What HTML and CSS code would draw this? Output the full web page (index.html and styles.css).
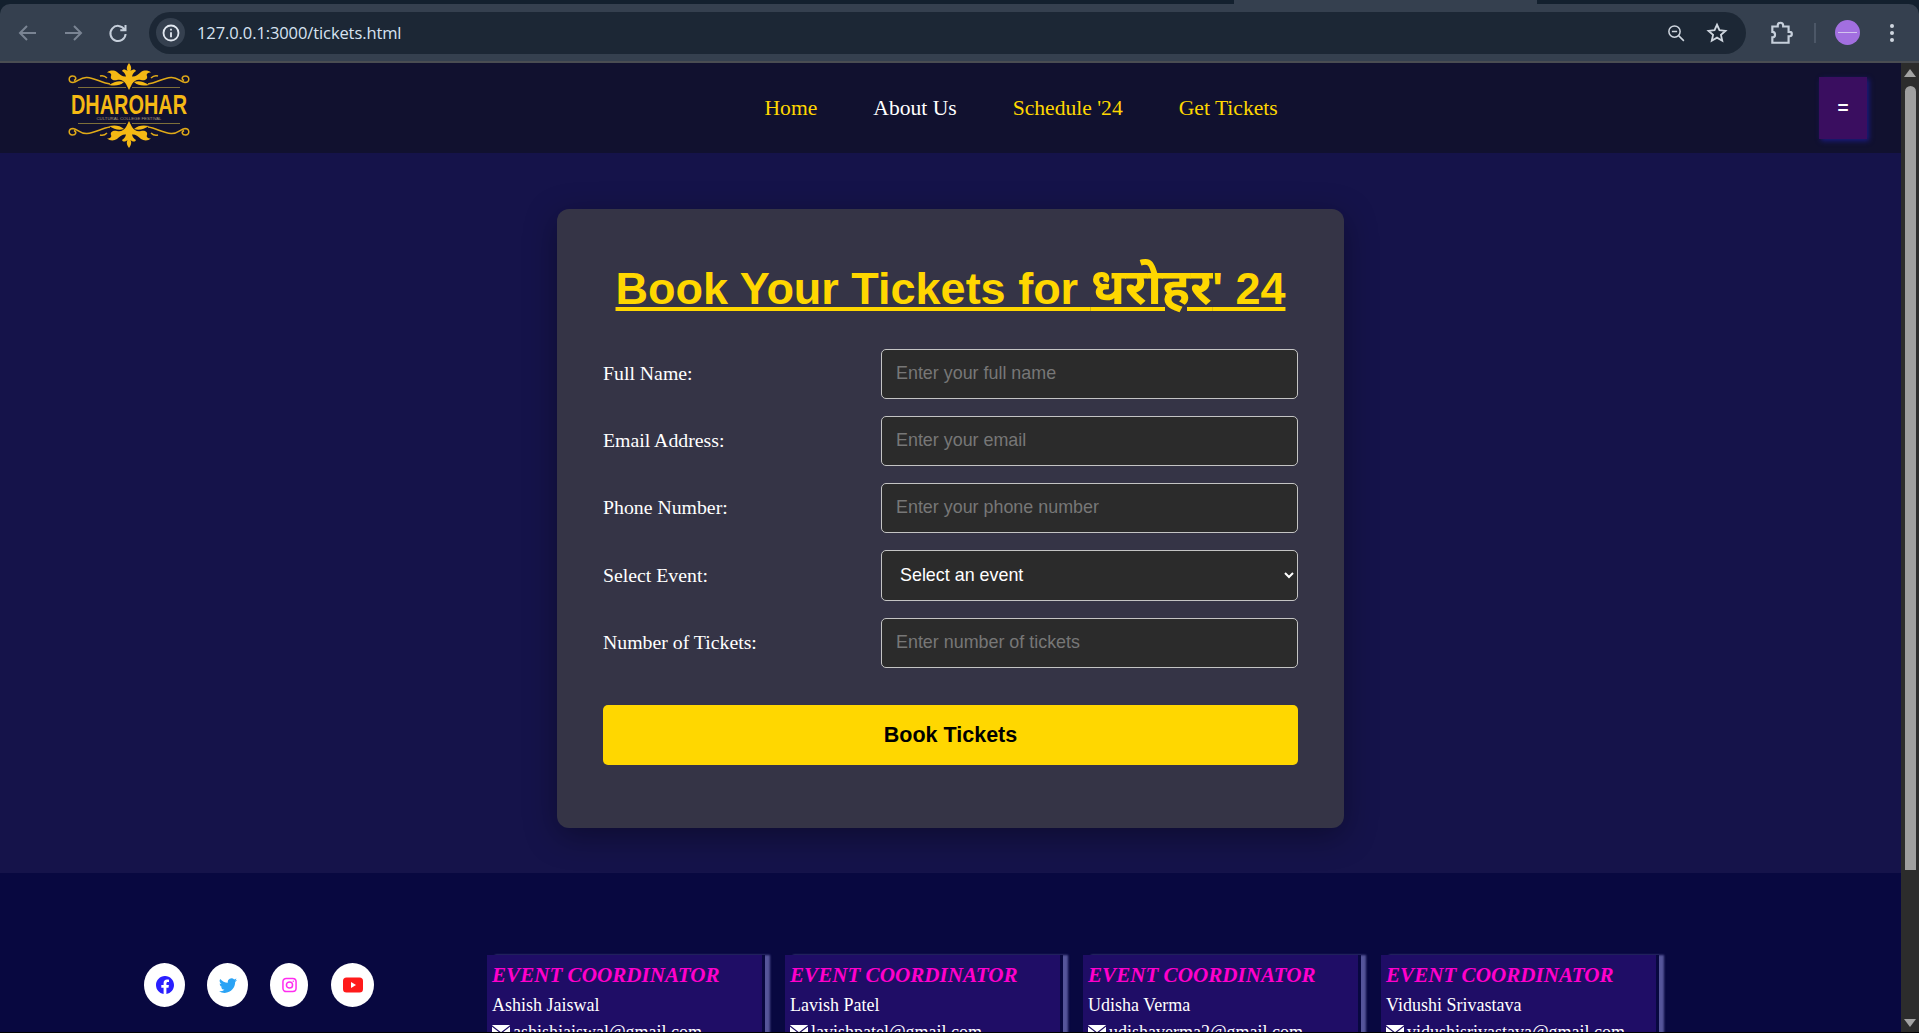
FILE: index.html

```html
<!DOCTYPE html>
<html lang="en">
<head>
  <meta charset="UTF-8" />
  <title>Tickets - Dharohar</title>
  <link rel="stylesheet" href="styles.css">
</head>
<body>
  <div class="browser-top">
    <div class="tab-strip"><div class="tab-gap"></div></div>
    <div class="toolbar">
      <svg class="tb-icon dim" viewBox="0 0 24 24"><path d="M20 12H5M11 5l-7 7 7 7"/></svg>
      <svg class="tb-icon dim" viewBox="0 0 24 24"><path d="M4 12h15M13 5l7 7-7 7"/></svg>
      <svg class="tb-icon" viewBox="0 0 24 24"><path d="M18.500 8.500A7.600 7.600 0 1 0 19.600 13M19.500 4v5.200h-5.200"/></svg>
      <div class="url-pill">
        <span class="info-chip">
          <svg viewBox="0 0 24 24"><circle cx="12" cy="12" r="9"/><path d="M12 11v6M12 7v2"/></svg>
        </span>
        <span class="url-text">127.0.0.1:3000/tickets.html</span>
        <svg class="pill-icon" viewBox="0 0 24 24"><circle cx="10" cy="10" r="7.500"/><path d="M6.500 10h7M15.500 15.500l7 7"/></svg>
        <svg class="pill-icon star" viewBox="0 0 24 24"><path d="M12 3l2.700 6 6.500.7-4.900 4.300 1.400 6.400L12 17.100l-5.700 3.300 1.400-6.400-4.900-4.300 6.500-.7z"/></svg>
      </div>
      <svg class="tb-icon puzzle" viewBox="0 0 24 24"><path d="M4 6h5V5a2.500 2.500 0 0 1 5 0v1h5v5h1a2 2 0 0 1 0 4h-1v6H4v-5a2.500 2.500 0 0 0 0-5z"/></svg>
      <span class="tb-sep"></span>
      <span class="avatar"><span></span></span>
      <span class="tb-dots"><i></i><i></i><i></i></span>
    </div>
  </div>

  <div class="viewport">
    <div class="page">
      <header class="site-nav">
        <a class="logo" href="#">
          <svg viewBox="0 0 122 85" width="122" height="85">
            <defs>
              <g id="orn-half">
                <path class="orn-fill" d="M61 0C63 3 64 5 62.500 8C65 6 67 6 68 8C66 9 64.500 11 64 13.500C67 14 70 12 73 9C76 7 80 7 83 9.500C80 9.500 78 11 79 13C80 16 77 18 73 17C69 16 66 18 64 21L61 27Z"/>
                <path class="orn-fill" d="M66 19C71 17 76 19 81 22C76 23 70 23 66 19Z"/>
                <path class="orn-line" d="M80 21C88 20 95 15 103 14.500C110 14 112 19 117 19.500C122 19.500 122 13 117.500 13C114 13 113 16 116 17.500"/>
                <path class="orn-thin" d="M64 24.500H112"/>
                <path class="orn-line" d="M83 15C85 13 87 12 90 13"/>
              </g>
              <g id="orn-full">
                <use href="#orn-half"/>
                <use href="#orn-half" transform="translate(122 0) scale(-1 1)"/>
              </g>
            </defs>
            <use href="#orn-full"/>
            <use href="#orn-full" transform="translate(0 85) scale(1 -1)"/>
            <text class="logo-word" x="61" y="51" text-anchor="middle" textLength="116" lengthAdjust="spacingAndGlyphs">DHAROHAR</text>
            <text class="logo-sub" x="61" y="57" text-anchor="middle" textLength="65" lengthAdjust="spacingAndGlyphs">CULTURAL COLLEGE FESTIVAL</text>
          </svg>
        </a>
        <nav class="nav-links">
          <a href="#">Home</a>
          <a href="#" class="active">About Us</a>
          <a href="#">Schedule '24</a>
          <a href="#">Get Tickets</a>
        </nav>
        <button class="menu-btn">=</button>
      </header>

      <main class="booking">
        <section class="card">
          <h1>Book Your Tickets for <span class="hindi">धरोहर</span>' 24</h1>
          <form class="ticket-form">
            <div class="row">
              <label for="fullName">Full Name:</label>
              <input id="fullName" type="text" placeholder="Enter your full name">
            </div>
            <div class="row">
              <label for="email">Email Address:</label>
              <input id="email" type="text" placeholder="Enter your email">
            </div>
            <div class="row">
              <label for="phone">Phone Number:</label>
              <input id="phone" type="text" placeholder="Enter your phone number">
            </div>
            <div class="row">
              <label for="eventPick">Select Event:</label>
              <select id="eventPick">
                <option>Select an event</option>
              </select>
            </div>
            <div class="row">
              <label for="count">Number of Tickets:</label>
              <input id="count" type="text" placeholder="Enter number of tickets">
            </div>
            <button type="button" class="book-btn">Book Tickets</button>
          </form>
        </section>
      </main>

      <footer class="site-footer">
        <div class="socials">
          <a href="#" class="social">
            <svg class="fb" viewBox="0 0 16 16" width="18" height="18"><path d="M16 8.049c0-4.446-3.582-8.050-8-8.050C3.580 0-.002 3.603-.002 8.050c0 4.017 2.926 7.347 6.750 7.951v-5.625h-2.030V8.050H6.750V6.275c0-2.017 1.195-3.131 3.022-3.131.876 0 1.791.157 1.791.157v1.980h-1.009c-.993 0-1.303.621-1.303 1.258v1.510h2.218l-.354 2.326H9.250V16c3.824-.604 6.750-3.934 6.750-7.951z"/></svg>
          </a>
          <a href="#" class="social">
            <svg class="tw" viewBox="0 0 16 16" width="18" height="18"><path d="M5.026 15c6.038 0 9.341-5.003 9.341-9.334 0-.14 0-.282-.006-.422A6.685 6.685 0 0 0 16 3.542a6.658 6.658 0 0 1-1.889.518 3.301 3.301 0 0 0 1.447-1.817 6.533 6.533 0 0 1-2.087.793A3.286 3.286 0 0 0 7.875 6.030a9.325 9.325 0 0 1-6.767-3.429 3.289 3.289 0 0 0 1.018 4.382A3.323 3.323 0 0 1 .64 6.575v.045a3.288 3.288 0 0 0 2.632 3.218 3.203 3.203 0 0 1-.865.115 3.230 3.230 0 0 1-.614-.057 3.283 3.283 0 0 0 3.067 2.277A6.588 6.588 0 0 1 .78 13.580a6.320 6.320 0 0 1-.78-.045A9.344 9.344 0 0 0 5.026 15z"/></svg>
          </a>
          <a href="#" class="social">
            <svg class="ig" viewBox="0 0 16 16" width="15" height="16"><rect x="1" y="1" width="14" height="14" rx="3.500"/><circle cx="8" cy="8" r="3.300"/><circle class="ig-dot" cx="12" cy="4" r=".8"/></svg>
          </a>
          <a href="#" class="social yt-link">
            <svg viewBox="0 0 20 16" width="20" height="16"><rect class="yt" x="0" y="0.500" width="20" height="15" rx="3.500"/><path class="yt-play" d="M8 5l5 3-5 3z"/></svg>
          </a>
        </div>
        <div class="coords">
          <div class="coord">
            <h3>EVENT COORDINATOR</h3>
            <p>Ashish Jaiswal</p>
            <p class="mail"><svg class="env" viewBox="0 0 18 14" width="18" height="14"><rect width="18" height="14" rx="1"/><path d="M0 1l9 7 9-7"/></svg>ashishjaiswal@gmail.com</p>
          </div>
          <div class="coord">
            <h3>EVENT COORDINATOR</h3>
            <p>Lavish Patel</p>
            <p class="mail"><svg class="env" viewBox="0 0 18 14" width="18" height="14"><rect width="18" height="14" rx="1"/><path d="M0 1l9 7 9-7"/></svg>lavishpatel@gmail.com</p>
          </div>
          <div class="coord">
            <h3>EVENT COORDINATOR</h3>
            <p>Udisha Verma</p>
            <p class="mail"><svg class="env" viewBox="0 0 18 14" width="18" height="14"><rect width="18" height="14" rx="1"/><path d="M0 1l9 7 9-7"/></svg>udishaverma2@gmail.com</p>
          </div>
          <div class="coord">
            <h3>EVENT COORDINATOR</h3>
            <p>Vidushi Srivastava</p>
            <p class="mail"><svg class="env" viewBox="0 0 18 14" width="18" height="14"><rect width="18" height="14" rx="1"/><path d="M0 1l9 7 9-7"/></svg>vidushisrivastava@gmail.com</p>
          </div>
        </div>
      </footer>
    </div>
    <div class="scrollbar">
      <span class="sb-up"></span>
      <span class="sb-thumb"></span>
      <span class="sb-down"></span>
    </div>
  </div>
  <div class="bottom-line"></div>
</body>
</html>
```

FILE: styles.css

```css
* { box-sizing: border-box; }
html, body { height: 100%; }
body {
  margin: 0;
  display: flex;
  flex-direction: column;
  overflow: hidden;
  background: #000;
  font-family: "Liberation Serif", serif;
  color: white;
}

/* browser bar */
.browser-top { flex: none; height: 63px; background: #13202e; }
.tab-strip { height: 4px; }
.tab-gap { width: 303px; height: 4px; margin-left: 1234px; background: #35404f; }
.toolbar {
  height: 59px;
  display: flex;
  align-items: center;
  padding: 0 14px 0 16px;
  background: #35404f;
  border-bottom: 2px solid #4a4d52;
  border-radius: 10px 10px 0 0;
}
.tb-icon { width: 24px; height: 24px; fill: none; stroke: #c6cfdb; stroke-width: 2; margin-right: 21px; flex: none; }
.tb-icon.dim { stroke: #7a8493; }
.url-pill {
  flex: none;
  width: 1597px;
  height: 42px;
  margin-left: -2px;
  display: flex;
  align-items: center;
  background: #1c2735;
  border-radius: 21px;
  padding: 0 18px 0 7px;
}
.info-chip {
  width: 29px;
  height: 29px;
  border-radius: 50%;
  background: #35404f;
  display: flex;
  align-items: center;
  justify-content: center;
}
.info-chip svg { width: 20px; height: 20px; fill: none; stroke: #e2e8f0; stroke-width: 2.2; }
.url-text { font: 16.5px "Open Sans", "Liberation Sans", sans-serif; color: #d7e3f1; margin-left: 12px; flex: 1; letter-spacing: -0.1px; }
.pill-icon { width: 18px; height: 18px; fill: none; stroke: #cfd6df; stroke-width: 2; margin-left: 21px; }
.pill-icon.star { width: 22px; height: 22px; }
.tb-icon.puzzle { width: 26px; height: 26px; margin: 0 0 0 22px; }
.tb-sep { width: 2px; height: 20px; background: #4c5767; margin: 0 19px 0 20px; }
.avatar {
  width: 25px;
  height: 25px;
  border-radius: 50%;
  background: #a26fe0;
  display: flex;
  align-items: center;
  justify-content: center;
}
.avatar span { width: 19px; height: 1px; background: #d2c3ee; }
.tb-dots { display: flex; flex-direction: column; gap: 3px; margin-left: 30px; }
.tb-dots i { width: 4px; height: 4px; border-radius: 50%; background: #cfd6df; }

/* page area */
.viewport { flex: 1; min-height: 0; display: flex; overflow: hidden; }
.page { flex: 1; min-width: 0; display: flex; flex-direction: column; background: #15134a; }
.scrollbar {
  flex: none;
  width: 18px;
  background: #2c2c2c;
  display: flex;
  flex-direction: column;
  align-items: center;
  padding-top: 6px;
}
.sb-up { width: 0; height: 0; border: 6px solid transparent; border-top: 0; border-bottom: 8px solid #a3a3a3; }
.sb-thumb { width: 11px; height: 784px; margin-top: 9px; background: #9f9f9f; border-radius: 6px 6px 0 0; }
.sb-down { width: 0; height: 0; border: 6px solid transparent; border-bottom: 0; border-top: 8px solid #a3a3a3; margin-top: auto; margin-bottom: 5px; }

/* nav */
.site-nav {
  flex: none;
  height: 90px;
  display: flex;
  align-items: center;
  padding: 0 34px 0 68px;
  background: #11112f;
}
.logo { display: block; height: 85px; margin-top: -5px; }
.orn-fill { fill: #f5b914; }
.orn-line { fill: none; stroke: #e0aa18; stroke-width: 1.5; }
.orn-thin { fill: none; stroke: #8a7a3c; stroke-width: 0.9; }
.logo-word { font: bold 28px "Liberation Sans Narrow", "Liberation Sans", sans-serif; fill: #f5b914; }
.logo-sub { font: 4px "Liberation Sans", sans-serif; fill: #a79c7c; }
.nav-links { display: flex; gap: 56px; margin-left: 574.500px; font-size: 21.6px; }
.nav-links a { color: #ffd700; text-decoration: none; }
.nav-links a.active { color: white; }
.menu-btn {
  margin-left: auto;
  width: 48px;
  height: 62px;
  border: 0;
  background: #3a0e60;
  color: white;
  font: bold 19px "Liberation Sans", sans-serif;
  box-shadow: 2px 2px 5px #1b1b80;
}

/* booking card */
.booking { flex: none; height: 720px; padding-top: 56px; }
.card {
  width: 787px;
  height: 619px;
  margin-left: 557px;
  padding: 0 46px;
  background: #353446;
  border-radius: 12px;
  box-shadow: 0 8px 32px rgba(0, 0, 0, 0.35);
}
h1 {
  margin: 0;
  padding-top: 50px;
  height: 140px;
  text-align: center;
  font: bold 45px/60px "Liberation Sans", "Noto Sans", sans-serif;
  color: #ffd700;
  text-decoration: underline;
}
.hindi { font-size: 50px; line-height: 50px; }
.ticket-form { display: flex; flex-direction: column; gap: 17px; }
.row { display: flex; align-items: center; justify-content: space-between; }
label { font-size: 19.8px; padding-bottom: 1px; }
input, select {
  width: 417px;
  height: 50px;
  padding: 0 14px 2px;
  background: #2b2b2b;
  color: white;
  border: 1px solid #c4c4c4;
  border-radius: 5px;
  font: 17.9px "Liberation Sans", sans-serif;
}
select { height: 51px; }
input::placeholder { color: #777; }
.book-btn {
  margin-top: 20px;
  height: 60px;
  background: #ffd700;
  color: black;
  border: 0;
  border-radius: 5px;
  font: bold 21.5px "Liberation Sans", sans-serif;
}

/* footer */
.site-footer {
  flex: 1;
  min-height: 0;
  display: flex;
  align-items: flex-start;
  overflow: hidden;
  padding: 82px 0 0 144px;
  background: #080840;
}
.socials { display: flex; gap: 22px; margin-top: 8px; width: 343px; flex: none; }
.social {
  height: 44px;
  padding: 0 11.5px;
  display: flex;
  align-items: center;
  justify-content: center;
  background: white;
  border-radius: 50%;
}
.yt-link { margin-left: 1px; }
.fb { fill: #2a1fff; }
.tw { fill: #2aa3f5; }
.ig { fill: none; stroke: #ff2cf0; stroke-width: 1.6; }
.ig-dot { fill: #ff2cf0; stroke: none; }
.yt { fill: #ff1a1a; }
.yt-play { fill: white; }
.coords { display: flex; gap: 23px; }
.coord {
  width: 275px;
  height: 90px;
  padding: 8px 5px;
  background: #1f0d66;
  box-shadow: 3px 0 0 #080840, 8px 0 2px #55559a;
}
.coord h3 { margin: 0; font-size: 21.1px; font-style: italic; color: #ff00cc; }
.coord p { margin: 7px 0 0; font-size: 18px; white-space: nowrap; }
.coord p.mail { margin-top: 6px; display: flex; gap: 3px; align-items: flex-start; }
.env { flex: none; margin-top: 3px; }
.env rect { fill: white; }
.env path { fill: none; stroke: #1f0d66; stroke-width: 1.2; }
.bottom-line { flex: none; height: 1px; background: #000; }
```
